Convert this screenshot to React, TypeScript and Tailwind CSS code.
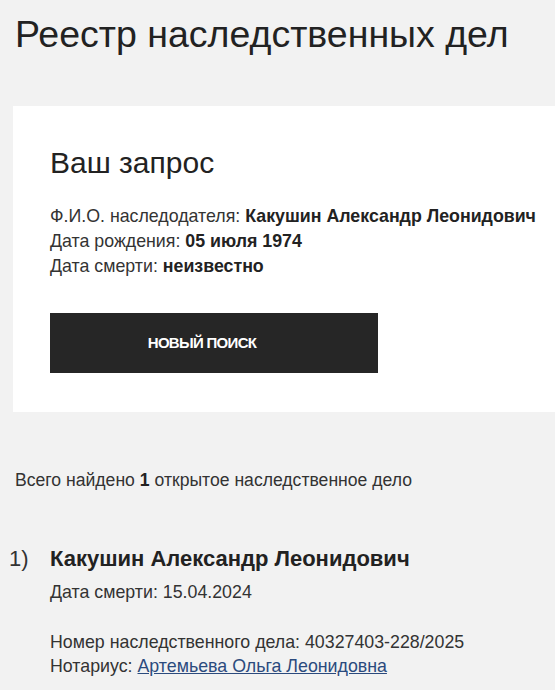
export default function App() {
  return (
    <div className="min-h-[690px] w-[555px] overflow-hidden bg-[#f2f2f2] font-[Liberation_Sans] text-[#222]">
      <h1 className="pl-[15px] pt-[14px] text-[37.5px] leading-[40px] text-[#222]">
        Реестр наследственных дел
      </h1>

      {/* REQUEST CARD */}
      <div className="mt-[52px] ml-[13px] bg-white pl-[37px] pt-[42px] pb-[39px]">
        <h2 className="text-[30px] leading-[30px]">Ваш запрос</h2>
        <div className="mt-[26px] text-[17.8px] leading-[25px] text-[#333]">
          <p className="whitespace-nowrap">
            Ф.И.О. наследодателя: <b className="text-[#222]">Какушин Александр Леонидович</b>
          </p>
          <p>
            Дата рождения: <b className="text-[#222]">05 июля 1974</b>
          </p>
          <p>
            Дата смерти: <b className="text-[#222]">неизвестно</b>
          </p>
        </div>
        <button className="mt-[34px] flex h-[60px] w-[328px] items-center justify-center bg-[#262626] pr-[24px] text-[15px] font-bold tracking-[-0.7px] text-white">
          НОВЫЙ ПОИСК
        </button>
      </div>

      {/* RESULTS */}
      <p className="mt-[58px] pl-[15px] text-[17.6px] leading-[20px] text-[#333]">
        Всего найдено <b className="text-[#222]">1</b> открытое наследственное дело
      </p>

      <div className="mt-[56px] flex">
        <div className="w-[50px] shrink-0 pl-[9px] text-[22px] leading-[26px] text-[#333]">1)</div>
        <div>
          <div className="text-[22px] font-bold leading-[26px]">Какушин Александр Леонидович</div>
          <p className="mt-[8px] text-[17.8px] leading-[24px] text-[#333]">Дата смерти: 15.04.2024</p>
          <p className="mt-[26px] text-[17.8px] leading-[24px] text-[#333]">
            Номер наследственного дела: 40327403-228/2025
          </p>
          <p className="text-[17.8px] leading-[24px] text-[#333]">
            Нотариус:{" "}
            <a href="#" className="text-[#2b4a7d] underline">
              Артемьева Ольга Леонидовна
            </a>
          </p>
        </div>
      </div>
    </div>
  );
}
